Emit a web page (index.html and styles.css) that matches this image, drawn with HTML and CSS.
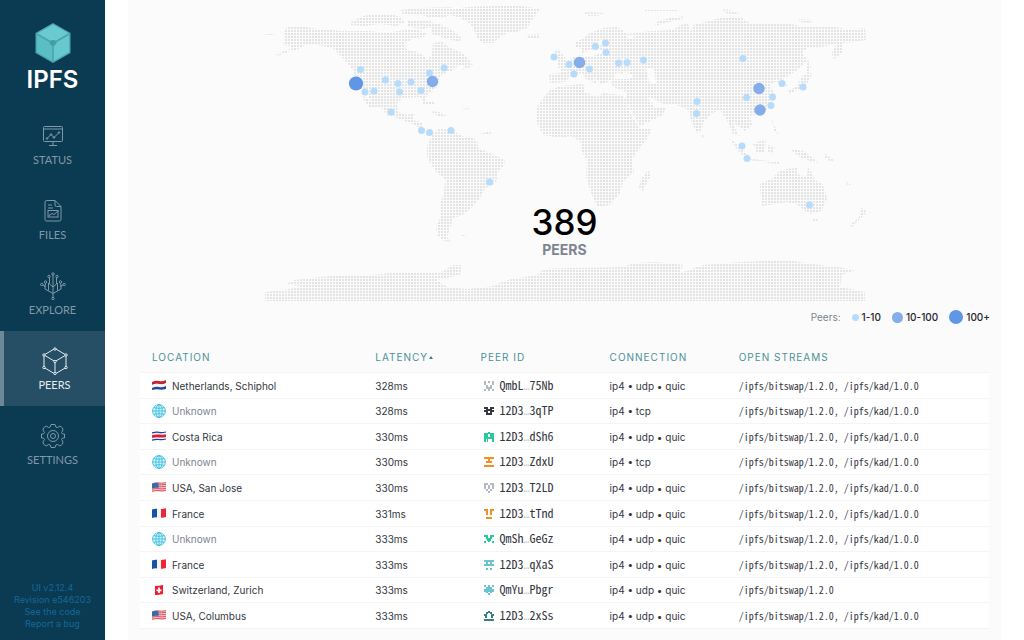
FILE: index.html
```
<!DOCTYPE html>
<html lang="en">
<head>
<meta charset="utf-8">
<title>Peers - IPFS</title>
<link rel="stylesheet" href="styles.css">
</head>
<body>
<svg class="defs" aria-hidden="true">
  <symbol id="nl" viewBox="0 0 14 11"><path d="M0 2Q4 0 7 1T14 0V4Q10 5 7 4T0 5Z" fill="#c8202f"/><path d="M0 5Q4 3 7 4T14 3V7Q10 8 7 7T0 8Z" fill="#f4f4f4"/><path d="M0 8Q4 6 7 7T14 6V9Q10 10 7 9.500T0 10Z" fill="#1e4a96"/></symbol>
  <symbol id="cr" viewBox="0 0 14 11"><path d="M0 1.500Q4 0 7 .8T14 .3V9Q10 10 7 9.300T0 10Z" fill="#eef0f6"/><path d="M0 2Q4 .8 7 1.400T14 1M0 9.200Q4 8 7 8.500T14 8" fill="none" stroke="#27408b" stroke-width="1.200"/><path d="M0 5.700Q4 4.500 7 5T14 4.500" fill="none" stroke="#d81e34" stroke-width="2.800"/></symbol>
  <symbol id="us" viewBox="0 0 14 11"><path d="M0 1.500Q4 0 7 .8T14 .3V9Q10 10 7 9.300T0 10Z" fill="#f5c9cd"/><path d="M0 9.300Q4 8 7 8.700T14 8.300M0 7.300Q4 6 7 6.700T14 6.300M6 4.700Q9 5 14 4.300M6 2.800Q9 3 14 2.300M6 1Q9 1.400 14 .8" fill="none" stroke="#dd5260"/><path d="M0 1.500Q4 0 6.500 .8V6Q3 5.500 0 6.500Z" fill="#3e6ba8"/></symbol>
  <symbol id="fr" viewBox="0 0 14 11"><path d="M0 1.500Q3 .3 5 .8V9.500Q3 9 0 10Z" fill="#1554a3"/><path d="M5 .8Q7 1.300 9 1V9.800Q7 10 5 9.500Z" fill="#f3f3f3"/><path d="M9 1Q11 1 14 .3V9Q11 10 9 9.800Z" fill="#ee2737"/></symbol>
  <symbol id="ch" viewBox="0 0 14 11"><path d="M3 1Q7 1 11 0V9Q7 10 3 10Z" fill="#ee1c2e"/><path d="M7 2.500V8M4.500 5.300H9.500" stroke="#fff" stroke-width="1.800"/></symbol>
  <symbol id="globe" viewBox="0 0 14 14"><circle cx="7" cy="7" r="6.500" fill="#d9f4fb"/><g fill="none" stroke="#38bfdf" stroke-width=".9"><circle cx="7" cy="7" r="6.400"/><ellipse cx="7" cy="7" rx="3.200" ry="6.400"/><path d="M7 .6V13.400M.6 7H13.400M1.500 3.700Q7 5 12.500 3.700M1.500 10.300Q7 9 12.500 10.300"/></g></symbol>
</svg>
<div class="app">
  <aside class="sidebar">
    <a class="brand" href="#welcome" aria-label="IPFS">
      <svg class="cube" viewBox="0 0 36 40"><path d="M18 0 35.500 10V30L18 40 .5 30V10Z" fill="#4ba5ab"/><path d="M18 1.500 33.500 10.300 21 17.500Q18 16.500 15 17.500L2.500 10.300Z" fill="#6acad1"/><path d="M1.800 12 14 19Q14.300 21.500 17.200 22.500V38L1.800 29Z" fill="#5bbdc5"/><path d="M34.200 12 22 19Q21.700 21.500 18.800 22.500V38L34.200 29Z" fill="#68c8cf"/><circle cx="18" cy="20" r="2.800" fill="#459da3"/></svg>
      <span class="wordmark">IPFS</span>
    </a>
    <nav class="nav">
      <a class="item" href="#status">
        <svg class="icon" viewBox="0 0 28 28"><rect x="4.500" y="4.500" width="19" height="15" rx="1"/><path d="M4.500 7H23.500M14 19.500V23M10 23.500H18M8 16.500 12 12.500 15 15.500 20 10.500"/><circle cx="8" cy="16.500" r=".8"/><circle cx="12" cy="12.500" r=".8"/><circle cx="15" cy="15.500" r=".8"/><circle cx="20" cy="10.500" r=".8"/></svg>
        <span>STATUS</span></a>
      <a class="item" href="#files">
        <svg class="icon" viewBox="0 0 28 28"><path d="M7.500 3.500H16L22 9.500V22.500Q22 24 20.500 24H7.500Q6 24 6 22.500V5Q6 3.500 7.500 3.500ZM16 3.500V8Q16 9.500 17.500 9.500H22M9 8H13M9 11H14"/><rect x="9" y="13.500" width="10" height="6.500"/><path d="M9.500 19 13 16.500 15 17.500 19 14"/></svg>
        <span>FILES</span></a>
      <a class="item" href="#explore">
        <svg class="icon" viewBox="0 0 28 28"><path d="M14 2V26M14 21.500 6 17V14L3 12.500M14 21.500 22 17V14L25 12.500M9.500 18.500V11M18.500 18.500V11M14 15 10.500 12V6M14 15 17.500 12V6M6 15 6.500 11M22 15 21.500 11"/><g class="nodes"><circle cx="14" cy="2" r="1.200"/><circle cx="14" cy="26.500" r="1.200"/><circle cx="2.800" cy="12.500" r="1.200"/><circle cx="25.200" cy="12.500" r="1.200"/><circle cx="6.500" cy="10" r="1.200"/><circle cx="21.500" cy="10" r="1.200"/><circle cx="10" cy="4.500" r="1.200"/><circle cx="18" cy="4.500" r="1.200"/></g></svg>
        <span>EXPLORE</span></a>
      <a class="item active" href="#peers" aria-current="page">
        <svg class="icon" viewBox="0 0 28 28"><path d="M14 1.500 25 8V20.500L14 27 3 20.500V8ZM3 8 14 14.500 25 8M14 14.500V27"/><g class="nodes"><circle cx="14" cy="2" r="1.200"/><circle cx="25" cy="8" r="1.200"/><circle cx="25" cy="20.500" r="1.200"/><circle cx="14" cy="26.500" r="1.200"/><circle cx="3" cy="20.500" r="1.200"/><circle cx="3" cy="8" r="1.200"/><circle cx="14" cy="14.500" r="1.200"/></g></svg>
        <span>PEERS</span></a>
      <a class="item" href="#settings">
        <svg class="icon" viewBox="0 0 28 28"><path d="M12 2.500H16Q16.500 6 18.500 5.500Q20.500 3.500 22 4.500L24 7Q24 9 22.500 10.500Q23 12.500 25.500 12V16Q23 15.500 22.500 17.500Q24 19 24 21L22 23.500Q20.500 24.500 18.500 22.500Q16.500 22 16 25.500H12Q11.500 22 9.500 22.500Q7.500 24.500 6 23.500L4 21Q4 19 5.500 17.500Q5 15.500 2.500 16V12Q5 12.500 5.500 10.500Q4 9 4 7L6 4.500Q7.500 3.500 9.500 5.500Q11.500 6 12 2.500Z"/><circle cx="14" cy="14" r="5.500"/><circle cx="14" cy="14" r="2.500"/></svg>
        <span>SETTINGS</span></a>
    </nav>
    <footer class="meta">
      <a href="#release">UI v2.12.4</a>
      <a href="#revision">Revision e546203</a>
      <a href="#code">See the code</a>
      <a href="#bug">Report a bug</a>
    </footer>
  </aside>
  <main class="main">
    <section class="panel">
      <div class="map">
        <svg class="world" viewBox="128 0 873 304" role="img" aria-label="World map of connected peers">
          <defs><pattern id="dots" width="3" height="3" patternUnits="userSpaceOnUse"><rect class="dot" x="0" y="0" width="2" height="2"/></pattern></defs>
          <g fill="url(#dots)">
            <path d="M265 34H274V36H265ZM276 54 290 49V51L278 56ZM283 45 285 35 283 33 287 27 300 26 317 29 343 31 370 31 385 33 405 30 417 30 427 33 424 37 414 38 405 43 406 49 417 52 423 55 428 60 432 53 433 43 443 42 450 48 463 53 468 58 472 65 458 66 452 71 447 72 440 77 437 87 427 95 425 103 420 97 403 98 397 103 398 112 407 115 415 113 413 120 423 123 423 130 415 125 400 119 387 115 382 108 374 108 367 93 357 87 353 70 343 58 333 48 317 45 305 45 293 52 290 46Z"/>
            <path d="M351 22 363 16 376 14 392 14 400 17 405 22 396 26 380 24 365 26 351 25ZM400 10 420 8 450 7 456 10 446 17 430 18 420 14 403 14ZM408 21 430 20 436 25 423 29 408 27ZM430 24 440 24 452 30 462 38 459 42 445 38 432 34ZM450 10 467 7 493 6 515 5 527 7 541 9 537 13 532 20 527 28 517 32 507 33 500 37 493 43 483 43 477 38 473 27 468 22 460 18 450 15ZM524 35 540 34 538 39 529 38ZM423 102 434 102 434 104 423 104ZM430 111 440 112 448 117 440 117ZM465 65 473 64 471 67 462 70ZM361 96 366 97 376 108 370 108Z"/>
            <path d="M433 133 440 128 447 130 457 133 464 137 473 138 478 142 478 148 490 153 505 160 504 165 498 172 497 180 493 185 485 188 480 198 474 205 467 212 460 216 453 218 450 228 447 237 452 242 444 241 438 236 436 228 440 218 440 205 443 195 446 180 437 173 431 164 427 157 427 146ZM461 235 466 235 465 237 461 237Z"/>
            <path d="M537 123 537 107 543 98 550 90 560 86 583 84 585 92 597 97 603 93 623 95 627 103 632 117 640 128 652 129 645 142 638 150 632 160 634 172 623 182 620 193 610 205 597 207 590 190 586 177 587 160 582 152 580 141 570 136 560 138 543 135ZM648 169 651 175 643 191 639 188 640 182Z"/>
            <path d="M575 47 575 42 582 39 590 33 603 28 617 27 628 34 636 33 650 31 673 30 680 25 688 23 690 32 693 25 720 18 740 17 750 23 787 23 803 27 833 26 847 30 865 28 866 40 855 42 843 43 842 53 833 60 832 52 837 43 827 46 807 48 802 53 808 60 800 68 790 75 783 78 788 87 783 87 776 81 770 85 776 97 772 107 760 113 750 116 752 125 745 131 737 125 733 123 739 136 733 134 727 120 720 110 713 113 703 122 702 130 697 133 692 123 688 110 677 105 663 104 652 98 647 97 655 107 666 108 663 115 640 126 631 110 625 100 627 92 615 88 610 83 613 79 602 85 593 76 598 84 587 80 582 73 572 75 565 82 550 83 549 74 560 73 560 68 563 63 574 57 582 55 582 49Z"/>
            <path d="M555 50 559 49 568 63 567 68 559 68 555 55ZM583 12 605 13 597 16 588 16ZM655 26 658 21 670 18 685 16 682 19 665 23ZM645 10 677 10 677 12 645 12ZM723 9 733 11 742 15 725 13ZM798 19 813 20 810 23 800 22ZM808 60 811 66 808 75 806 70ZM803 75 812 73 810 79 803 90 796 90 790 94 787 91 796 87ZM771 117 775 127 779 135 774 131ZM729 138 737 144 748 155 743 156 735 147ZM753 144 766 139 765 152 757 153ZM768 145 775 147 771 155 768 151ZM748 158 760 160 780 162 778 164 754 161ZM790 149 804 151 819 163 812 162 798 156ZM824 153 834 160 832 162 824 158ZM845 180 851 185 848 186ZM700 134 704 136 702 139Z"/>
            <path d="M760 187 760 184 773 178 778 172 787 169 797 168 799 175 807 177 808 167 811 171 815 180 822 184 825 190 827 199 821 211 811 214 805 211 798 205 787 202 775 204 762 206ZM812 218 819 218 816 222 812 221ZM861 207 867 212 860 219 851 228 850 225 859 217Z"/>
            <path d="M265 300V292L282 290 303 287 286 284 295 280 320 277 345 275 370 275 393 273 440 273 453 265 462 265 460 275 437 280 447 287 467 289 493 286 507 280 537 275 543 269 570 268 623 267 635 263 657 262 683 265 680 273 703 265 740 262 760 261 793 261 820 265 837 267 855 270 842 275 840 287 865 292V301H265ZM463 109 474 107 464 110ZM479 134 491 131 490 135 482 135Z"/>
          </g>
          <path class="sea" d="M613 79 617 72 622 74 626 71 634 77 628 79ZM646 69 654 68 656 84 649 82ZM582 53 592 50 601 39 603 41 599 49 607 52 598 54 590 57 583 57ZM626 36 636 36 630 39Z"/>
          <g class="few">
            <circle cx="360.500" cy="69.500" r="3.500"/><circle cx="365" cy="92" r="3.500"/><circle cx="374" cy="91" r="3.500"/><circle cx="385.500" cy="80" r="3.500"/><circle cx="398" cy="83.500" r="3.500"/><circle cx="411" cy="82" r="3.500"/><circle cx="399.500" cy="92" r="3.500"/><circle cx="421" cy="90.500" r="3.500"/><circle cx="429.500" cy="73" r="3.500"/><circle cx="444" cy="68" r="3.500"/><circle cx="391" cy="112" r="3.500"/><circle cx="421.500" cy="130.500" r="3.500"/><circle cx="429.500" cy="132.500" r="3.500"/><circle cx="451" cy="130.500" r="3.500"/><circle cx="489.500" cy="182" r="3.500"/>
            <circle cx="554" cy="57" r="3.500"/><circle cx="569" cy="64.500" r="3.500"/><circle cx="574" cy="74" r="3.500"/><circle cx="589.500" cy="69" r="3.500"/><circle cx="595.500" cy="46.500" r="3.500"/><circle cx="605.500" cy="43" r="3.500"/><circle cx="606" cy="52.500" r="3.500"/><circle cx="618.500" cy="63" r="3.500"/><circle cx="627" cy="62.500" r="3.500"/><circle cx="643.500" cy="60" r="3.500"/><circle cx="743" cy="58.500" r="3.500"/><circle cx="697" cy="101.500" r="3.500"/><circle cx="696.500" cy="113.500" r="3.500"/><circle cx="746.500" cy="97.500" r="3.500"/><circle cx="772.500" cy="97" r="3.500"/><circle cx="771" cy="105.500" r="3.500"/><circle cx="782" cy="83.500" r="3.500"/><circle cx="803" cy="87" r="3.500"/><circle cx="742" cy="146" r="3.500"/><circle cx="747" cy="158.500" r="3.500"/><circle cx="809.500" cy="205" r="3.500"/>
          </g>
          <g class="some"><circle cx="432.500" cy="81.500" r="5.700"/><circle cx="579.500" cy="62.500" r="5.700"/><circle cx="759" cy="88.500" r="5.700"/><circle cx="760" cy="110" r="5.700"/></g>
          <circle class="many" cx="356" cy="83.500" r="7.100"/>
        </svg>
        <div class="count"><strong>389</strong><span>PEERS</span></div>
      </div>
      <div class="legend">
        <span class="legend-title">Peers:</span>
        <span class="key"><i class="swatch small"></i>1-10</span>
        <span class="key"><i class="swatch medium"></i>10-100</span>
        <span class="key"><i class="swatch large"></i>100+</span>
      </div>
      <table class="peers">
        <colgroup><col class="c-location"><col class="c-latency"><col class="c-peer"><col class="c-connection"><col></colgroup>
        <thead><tr><th>LOCATION</th><th aria-sort="ascending">LATENCY<i class="sort"></i></th><th>PEER ID</th><th>CONNECTION</th><th>OPEN STREAMS</th></tr></thead>
        <tbody>
          <tr><td><div class="place"><svg class="flag"><use href="#nl"/></svg>Netherlands, Schiphol</div></td><td>328ms</td><td><div class="peer"><svg class="ident" viewBox="0 0 10 10" fill="#b4bac4"><path d="M0 0h2v2H0zM4 0h2v2H4zM8 0h2v2H8zM0 2h2v2H0zM8 2h2v2H8zM2 4h2v2H2zM6 4h2v2H6zM2 6h6v2H2zM0 8h2v2H0zM4 8h2v2H4zM8 8h2v2H8z"/></svg><span>QmbL<i>…</i>75Nb</span></div></td><td>ip4 • udp • quic</td><td class="streams">/ipfs/bitswap/1.2.0, /ipfs/kad/1.0.0</td></tr>
          <tr><td><div class="place unknown"><svg class="globe"><use href="#globe"/></svg>Unknown</div></td><td>328ms</td><td><div class="peer"><svg class="ident" viewBox="0 0 10 10" fill="#343942"><path d="M0 1h4v2H0zM6 1h4v2H6zM2 3h6v2H2zM0 4h4v2H0zM6 4h4v2H6zM2 6h2v2H2zM6 6h2v2H6zM2 7h6v2H2z"/></svg><span>12D3<i>…</i>3qTP</span></div></td><td>ip4 • tcp</td><td class="streams">/ipfs/bitswap/1.2.0, /ipfs/kad/1.0.0</td></tr>
          <tr><td><div class="place"><svg class="flag"><use href="#cr"/></svg>Costa Rica</div></td><td>330ms</td><td><div class="peer"><svg class="ident" viewBox="0 0 10 10" fill="#28ca9a"><path d="M4 0h2v2H4zM0 1h4v9H2V8H2v2H0zM6 1h4v9H8V7H6zM2 5h2v2H2zM4 5h2v2H4z"/><path fill="#fff" d="M2 7h1v3H2z"/></svg><span>12D3<i>…</i>dSh6</span></div></td><td>ip4 • udp • quic</td><td class="streams">/ipfs/bitswap/1.2.0, /ipfs/kad/1.0.0</td></tr>
          <tr><td><div class="place unknown"><svg class="globe"><use href="#globe"/></svg>Unknown</div></td><td>330ms</td><td><div class="peer"><svg class="ident" viewBox="0 0 10 10" fill="#f39021"><path d="M0 0h10v2H0zM4 2h2v2H4zM2 4h6v2H2zM0 8h10v2H0z"/></svg><span>12D3<i>…</i>ZdxU</span></div></td><td>ip4 • tcp</td><td class="streams">/ipfs/bitswap/1.2.0, /ipfs/kad/1.0.0</td></tr>
          <tr><td><div class="place"><svg class="flag"><use href="#us"/></svg>USA, San Jose</div></td><td>330ms</td><td><div class="peer"><svg class="ident" viewBox="0 0 10 10" fill="#b4bac4"><path d="M0 0h4v2H0zM6 0h4v2H6zM0 2h2v4H0zM8 2h2v4H8zM4 2h2v4H4zM2 6h2v2H2zM6 6h2v2H6zM4 8h2v2H4z"/></svg><span>12D3<i>…</i>T2LD</span></div></td><td>ip4 • udp • quic</td><td class="streams">/ipfs/bitswap/1.2.0, /ipfs/kad/1.0.0</td></tr>
          <tr><td><div class="place"><svg class="flag"><use href="#fr"/></svg>France</div></td><td>331ms</td><td><div class="peer"><svg class="ident" viewBox="0 0 10 10" fill="#f39021"><path d="M0 0h4v2H0zM6 0h4v2H6zM2 2h2v4H2zM6 2h2v4H6zM2 8h6v2H2z"/></svg><span>12D3<i>…</i>tTnd</span></div></td><td>ip4 • udp • quic</td><td class="streams">/ipfs/bitswap/1.2.0, /ipfs/kad/1.0.0</td></tr>
          <tr><td><div class="place unknown"><svg class="globe"><use href="#globe"/></svg>Unknown</div></td><td>333ms</td><td><div class="peer"><svg class="ident" viewBox="0 0 10 10" fill="#28ca9a"><path d="M0 1h4v2H0zM6 1h4v2H6zM2 3h2v2H2zM6 3h2v2H6zM4 4h2v4H4zM0 7h2v2H0zM8 7h2v2H8zM3 5h4v2H3z"/></svg><span>QmSh<i>…</i>GeGz</span></div></td><td>ip4 • udp • quic</td><td class="streams">/ipfs/bitswap/1.2.0, /ipfs/kad/1.0.0</td></tr>
          <tr><td><div class="place"><svg class="flag"><use href="#fr"/></svg>France</div></td><td>333ms</td><td><div class="peer"><svg class="ident" viewBox="0 0 10 10" fill="#69c4cd"><path d="M0 0h10v2H0zM2 2h2v2H2zM6 2h2v2H6zM0 4h10v2H0zM2 8h2v2H2zM6 8h2v2H6z"/></svg><span>12D3<i>…</i>qXaS</span></div></td><td>ip4 • udp • quic</td><td class="streams">/ipfs/bitswap/1.2.0, /ipfs/kad/1.0.0</td></tr>
          <tr><td><div class="place"><svg class="flag"><use href="#ch"/></svg>Switzerland, Zurich</div></td><td>333ms</td><td><div class="peer"><svg class="ident" viewBox="0 0 10 10" fill="#69c4cd"><path d="M0 0h2v2H0zM4 0h2v2H4zM8 0h2v2H8zM2 2h6v2H2zM0 4h10v3H0zM2 7h2v1H2zM6 7h2v1H6zM4 8h2v2H4z"/></svg><span>QmYu<i>…</i>Pbgr</span></div></td><td>ip4 • udp • quic</td><td class="streams">/ipfs/bitswap/1.2.0</td></tr>
          <tr><td><div class="place"><svg class="flag"><use href="#us"/></svg>USA, Columbus</div></td><td>333ms</td><td><div class="peer"><svg class="ident" viewBox="0 0 10 10" fill="#378085"><path d="M4 0h2v2H4zM2 1h2v2H2zM6 1h2v2H6zM0 3h3v2H0zM7 3h3v2H7zM1 5h2v2H1zM7 5h2v2H7zM0 8h10v2H0z"/></svg><span>12D3<i>…</i>2xSs</span></div></td><td>ip4 • udp • quic</td><td class="streams">/ipfs/bitswap/1.2.0, /ipfs/kad/1.0.0</td></tr>
        </tbody>
      </table>
    </section>
  </main>
</div>
</body>
</html>
```
FILE: styles.css
```
* { box-sizing: border-box; }
body { margin: 0; background: #fff; color: #34373f; font: 10px/16px Inter, "Liberation Sans", sans-serif; }
a { text-decoration: none; color: inherit; }
.defs { display: none; }
.app { display: flex; min-height: 100vh; }

.sidebar { flex: 0 0 105px; display: flex; flex-direction: column; background: #0b3a53; }
.brand { display: flex; flex-direction: column; align-items: center; padding-top: 23px; color: #fff; }
.cube { width: 36px; height: 40px; }
.wordmark { font-size: 24px; font-weight: 600; line-height: 32px; margin-top: 1px; }
.nav { padding-top: 10px; display: flex; flex-direction: column; }
.item { display: flex; flex-direction: column; align-items: center; gap: 3px; height: 75px; padding-top: 16px; color: #8199a6; font: 11px/14px Lato, sans-serif; }
.item.active { border-left: 4px solid #6d8998; background: #264e65; color: #e6ecef; }
.icon { width: 28px; height: 28px; fill: none; stroke: currentColor; stroke-width: 1; }
.nodes { fill: #0b3a53; }
.active .nodes { fill: #264e65; }
.meta { margin-top: auto; padding-bottom: 10px; display: flex; flex-direction: column; align-items: center; color: #12699a; font-size: 9px; line-height: 12px; }

.main { flex: 1; min-width: 0; padding: 0 23px; }
.panel { min-height: 100vh; background: #fbfbfb; padding-bottom: 10px; }
.map { position: relative; }
.world { display: block; width: 100%; }
.dot { fill: #e4e4e4; }
.sea { fill: #fbfbfb; }
.few { fill: #b7dcfb; }
.some { fill: #85aceb; }
.many { fill: #6096e6; }
.count { position: absolute; left: 0; right: 0; bottom: 45px; display: flex; flex-direction: column; align-items: center; }
.count strong { color: #000; font-size: 35px; font-weight: 500; line-height: 38px; }
.count span { color: #7f8491; font-size: 14px; font-weight: 700; line-height: 18px; }
.legend { display: flex; justify-content: flex-end; align-items: center; gap: 11px; height: 26px; padding-right: 11px; color: #24272e; }
.legend-title { color: #7f8491; }
.key { display: flex; align-items: center; gap: 3px; font-weight: 500; }
.swatch { border-radius: 50%; }
.small { width: 7px; height: 7px; background: #b7dcfb; }
.medium { width: 11px; height: 11px; background: #85aceb; }
.large { width: 14px; height: 14px; background: #6096e6; }

.peers { width: calc(100% - 24px); margin: 13px 12px 0; table-layout: fixed; border-collapse: separate; border-spacing: 0; font-size: 10px; }
.c-location { width: 26.3%; }
.c-latency { width: 12.4%; }
.c-peer, .c-connection { width: 15.2%; }
.peers th { height: 30px; padding: 0 0 2px 12px; border-bottom: 1px solid #f4f4f4; text-align: left; color: #4b9299; font-weight: 400; letter-spacing: 1px; }
.sort { display: inline-block; margin-left: 1px; border: 2px solid transparent; border-top: 0; border-bottom: 3px solid #378085; vertical-align: 2px; }
.peers td { height: 26px; padding: 0 0 0 12px; background: #fff; border-bottom: 1px solid #f4f4f4; white-space: nowrap; }
.peers tbody tr:nth-child(5n+2) td, .peers tbody tr:nth-child(5n+4) td { height: 25px; }
.place { display: flex; align-items: center; gap: 6px; }
.unknown { color: #7f8491; }
.flag { width: 14px; height: 11px; }
.globe { width: 14px; height: 14px; }
.peer { display: flex; align-items: center; gap: 6px; padding-left: 3px; font: 12px/16px "Noto Sans Mono CJK SC", "DejaVu Sans Mono", monospace; }
.peer i { color: #c4c8cf; font: 10px/16px "DejaVu Sans Mono", monospace; }
.ident { width: 10px; height: 10px; shape-rendering: crispEdges; }
.peers .streams { font: 10px/16px "Noto Sans Mono CJK SC", "DejaVu Sans Mono", monospace; }
```
